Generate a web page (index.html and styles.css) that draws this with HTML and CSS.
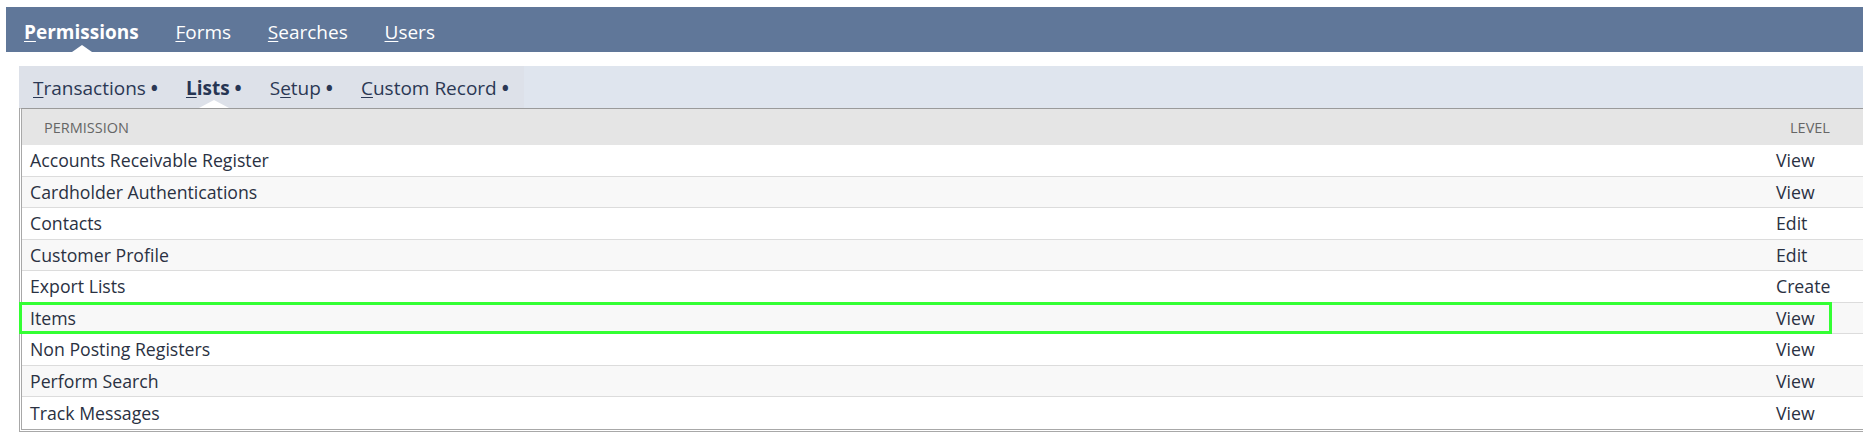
FILE: index.html
```html
<!DOCTYPE html>
<html lang="en">
<head>
<meta charset="utf-8">
<title>Permissions</title>
<link rel="stylesheet" href="styles.css">
</head>
<body>
<div class="page">
  <nav class="topbar">
    <span class="tab active"><u>P</u>ermissions</span>
    <span class="tab"><u>F</u>orms</span>
    <span class="tab"><u>S</u>earches</span>
    <span class="tab"><u>U</u>sers</span>
  </nav>
  <div class="subbar">
    <div class="subtabs">
      <span class="subtab"><u>T</u>ransactions <span class="dot">&bull;</span></span>
      <span class="subtab active"><u>L</u>ists <span class="dot">&bull;</span></span>
      <span class="subtab">S<u>e</u>tup <span class="dot">&bull;</span></span>
      <span class="subtab"><u>C</u>ustom Record <span class="dot">&bull;</span></span>
    </div>
  </div>
  <div class="table">
    <div class="row head"><div class="cell">Permission</div><div class="cell">Level</div></div>
    <div class="row"><div class="cell">Accounts Receivable Register</div><div class="cell">View</div></div>
    <div class="row alt"><div class="cell">Cardholder Authentications</div><div class="cell">View</div></div>
    <div class="row"><div class="cell">Contacts</div><div class="cell">Edit</div></div>
    <div class="row alt"><div class="cell">Customer Profile</div><div class="cell">Edit</div></div>
    <div class="row"><div class="cell">Export Lists</div><div class="cell">Create</div></div>
    <div class="row alt marked"><div class="cell">Items</div><div class="cell">View</div><span class="mark"></span></div>
    <div class="row"><div class="cell">Non Posting Registers</div><div class="cell">View</div></div>
    <div class="row alt"><div class="cell">Perform Search</div><div class="cell">View</div></div>
    <div class="row last"><div class="cell">Track Messages</div><div class="cell">View</div></div>
  </div>
</div>
</body>
</html>
```

FILE: styles.css
```css
html, body {
  margin: 0;
  padding: 0;
  background: #ffffff;
  overflow: hidden;
  font-family: "Open Sans", "Liberation Sans", sans-serif;
}

.page {
  padding-top: 7px;
}

.topbar {
  margin-left: 6px;
  height: 45px;
  box-sizing: border-box;
  padding-top: 12px;
  background: #607799;
  display: flex;
}

.tab {
  position: relative;
  padding: 0 18.4px;
  font-size: 19px;
  line-height: 26px;
  color: #ffffff;
  height: 33px;
}

.tab:first-child {
  padding-left: 18px;
}

.tab u {
  text-decoration-thickness: 1px;
  text-underline-offset: 2px;
}

.tab.active {
  font-weight: 700;
}

.tab.active::after {
  content: "";
  position: absolute;
  left: 50%;
  bottom: 0;
  margin-left: -10px;
  border-left: 10px solid transparent;
  border-right: 10px solid transparent;
  border-bottom: 7px solid #ffffff;
}

.subbar {
  margin-top: 14px;
  margin-left: 19px;
  height: 42px;
  background: #dfe5ee;
  display: flex;
}

.subtabs {
  display: flex;
  background: #dde1e9;
  padding-right: 1px;
}

.subtab {
  position: relative;
  padding: 9px 14px 0;
  font-size: 19px;
  line-height: 26px;
  color: #2b3854;
  white-space: nowrap;
}

.subtab u {
  text-decoration-thickness: 1px;
  text-underline-offset: 2px;
}

.subtab .dot {
  font-weight: 700;
}

.subtab.active {
  font-weight: 700;
  color: #263553;
}

.subtab.active::after {
  content: "";
  position: absolute;
  left: 50%;
  bottom: 0;
  margin-left: -15px;
  border-left: 15px solid transparent;
  border-right: 15px solid transparent;
  border-bottom: 8px solid #ffffff;
}

.table {
  margin-left: 19px;
  width: 1870px;
  border-top: 1px solid #9a9a9a;
  border-left: 3px double #a8a8a8;
  border-bottom: 3px double #a8a8a8;
}

.row {
  display: grid;
  grid-template-columns: 1746px 1fr;
  align-items: center;
  height: 31.5px;
  box-sizing: border-box;
  border-bottom: 1px solid #dcdcdc;
  background: #ffffff;
  font-size: 17.7px;
  color: #2a3142;
}

.row.alt {
  background: #f8f8f8;
}

.row.last {
  border-bottom: none;
}

.row .cell {
  padding-left: 8px;
  white-space: nowrap;
}

.row.head {
  height: 36px;
  background: #e5e5e5;
  border-bottom: none;
  font-size: 14.5px;
  text-transform: uppercase;
  color: #666666;
}

.row.head .cell {
  padding-left: 22px;
}

.row.marked {
  position: relative;
}

.mark {
  position: absolute;
  left: -3px;
  top: -1px;
  width: 1813px;
  height: 32px;
  box-sizing: border-box;
  border: 3px solid #33ff33;
  pointer-events: none;
}
```
